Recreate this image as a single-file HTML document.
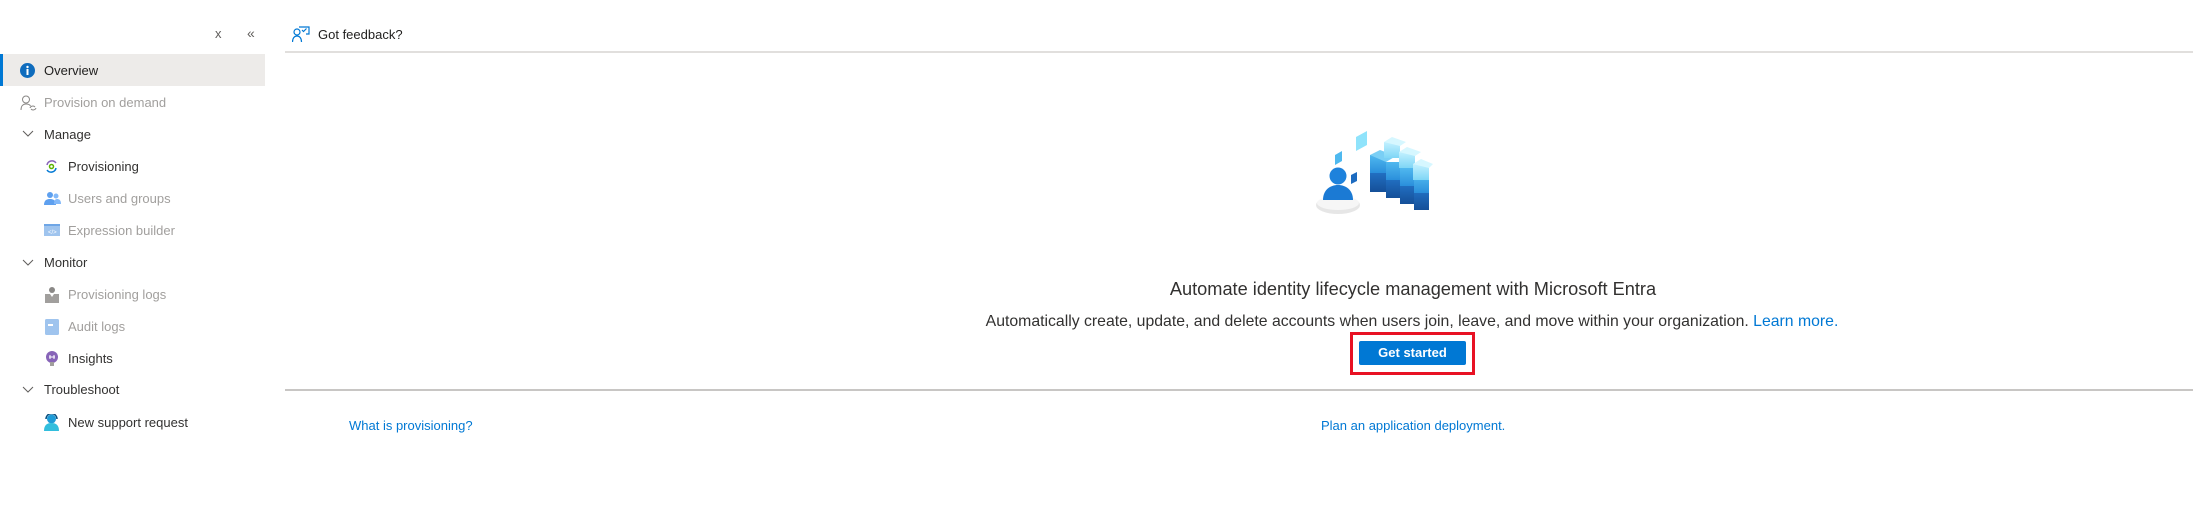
<!DOCTYPE html>
<html><head><meta charset="utf-8"><style>
*{margin:0;padding:0;box-sizing:border-box}
body{width:2193px;height:509px;background:#fff;font-family:"Liberation Sans",sans-serif;color:#323130;position:relative;overflow:hidden}
.a{position:absolute;white-space:nowrap}
.t{font-size:13px;line-height:16px}
.dis{color:#a19f9d}
.lnk{color:#0078d4}
</style></head><body>
<!-- sidebar -->
<div class="a" style="left:215px;top:26px;font-size:13px;color:#605e5c">x</div>
<div class="a" style="left:247px;top:25px;font-size:14px;color:#605e5c">«</div>
<div class="a" style="left:0;top:54px;width:265px;height:32px;background:#edebe9"></div>
<div class="a" style="left:0;top:54px;width:3px;height:32px;background:#0078d4"></div>
<svg class="a" style="left:20px;top:63px" width="15" height="15"><circle cx="7.5" cy="7.5" r="7.5" fill="#0f6cbd"/><rect x="6.5" y="6" width="2" height="6" fill="#fff"/><circle cx="7.5" cy="4" r="1.2" fill="#fff"/></svg>
<div class="a t" style="left:44px;top:63px;color:#201f1e">Overview</div>
<svg class="a" style="left:20px;top:95px" width="17" height="17" fill="none" stroke="#8a8886" stroke-width="1"><circle cx="6" cy="4.5" r="3.5"/><path d="M1 15c0-4 2-6 5-6s4 1 4.5 2"/><path d="M10 13a3 3 0 0 1 5-1M16 13a3 3 0 0 1-5 1"/></svg>
<div class="a t dis" style="left:44px;top:95px">Provision on demand</div>
<svg class="a" style="left:22px;top:130px" width="12" height="8"><path d="M1 1l5 5 5-5" fill="none" stroke="#605e5c" stroke-width="1"/></svg>
<div class="a t" style="left:44px;top:127px">Manage</div>
<svg class="a" style="left:44px;top:159px" width="15" height="15" fill="none" stroke-width="1.5"><path d="M3 6a5 5 0 0 1 9-2" stroke="#8764b8"/><path d="M12 9a5 5 0 0 1-9 2" stroke="#0078d4"/><circle cx="7.5" cy="7.5" r="2" stroke="#5db300"/></svg>
<div class="a t" style="left:68px;top:159px">Provisioning</div>
<svg class="a" style="left:44px;top:191px" width="17" height="15"><circle cx="6" cy="4" r="3" fill="#5ea0ef"/><circle cx="12" cy="5" r="2.5" fill="#83b9f9"/><path d="M0 14c0-5 3-6 6-6s6 1 6 6z" fill="#5ea0ef"/><path d="M10 13c0-3 1-5 3-5s4 1 4 5z" fill="#83b9f9"/></svg>
<div class="a t dis" style="left:68px;top:191px">Users and groups</div>
<svg class="a" style="left:44px;top:224px" width="16" height="12"><rect width="16" height="12" fill="#9fc4ee"/><rect width="16" height="2" fill="#6fa6e6"/><text x="4" y="10" font-size="6" fill="#fff">&lt;/&gt;</text></svg>
<div class="a t dis" style="left:68px;top:223px">Expression builder</div>
<svg class="a" style="left:22px;top:259px" width="12" height="8"><path d="M1 1l5 5 5-5" fill="none" stroke="#605e5c" stroke-width="1"/></svg>
<div class="a t" style="left:44px;top:255px">Monitor</div>
<svg class="a" style="left:45px;top:287px" width="14" height="16"><circle cx="7" cy="3" r="3" fill="#8a8886"/><path d="M0 7h5l2 3 2-3h5v9H0z" fill="#a19f9d"/></svg>
<div class="a t dis" style="left:68px;top:287px">Provisioning logs</div>
<svg class="a" style="left:45px;top:319px" width="14" height="16"><rect width="14" height="16" rx="1.5" fill="#9fc4ee"/><rect x="3" y="5" width="5" height="2" fill="#fff"/></svg>
<div class="a t dis" style="left:68px;top:319px">Audit logs</div>
<svg class="a" style="left:46px;top:351px" width="12" height="16"><circle cx="6" cy="6" r="6" fill="#8764b8"/><rect x="4" y="11" width="4" height="4" fill="#a19f9d"/><path d="M4 4v4M8 4v4M3 6h6" stroke="#fff" stroke-width="1"/></svg>
<div class="a t" style="left:68px;top:351px">Insights</div>
<svg class="a" style="left:22px;top:386px" width="12" height="8"><path d="M1 1l5 5 5-5" fill="none" stroke="#605e5c" stroke-width="1"/></svg>
<div class="a t" style="left:44px;top:382px">Troubleshoot</div>
<svg class="a" style="left:44px;top:414px" width="15" height="17"><circle cx="7.5" cy="5" r="4.5" fill="#1e9bd7"/><path d="M0 17c0-6 3-8 7.5-8s7.5 2 7.5 8z" fill="#32bedd"/><path d="M2 5a5.5 5.5 0 0 1 11 0" fill="none" stroke="#0a5080" stroke-width="1.5"/></svg>
<div class="a t" style="left:68px;top:415px">New support request</div>
<!-- header -->
<svg class="a" style="left:292px;top:26px" width="18" height="17" fill="none" stroke="#0078d4" stroke-width="1.2"><path d="M7 1h10v7h-3"/><circle cx="5" cy="6" r="3"/><path d="M0.5 16c0-4 2-6 4.5-6s4.5 2 4.5 6"/><path d="M10 4l1.5 1.5 3-3"/></svg>
<div class="a t" style="left:318px;top:27px;color:#201f1e">Got feedback?</div>
<div class="a" style="left:285px;top:51px;width:1908px;height:2px;background:#e1dfdd"></div>
<!-- illustration -->
<svg class="a" style="left:1300px;top:120px" width="150" height="105">
<defs><linearGradient id="tl" x1="0" y1="0" x2="0" y2="1"><stop offset="0" stop-color="#c3f1ff"/><stop offset="1" stop-color="#7fd6f6"/></linearGradient><linearGradient id="md" x1="0" y1="0" x2="0" y2="1"><stop offset="0" stop-color="#50b8ef"/><stop offset="1" stop-color="#2a8fdb"/></linearGradient><linearGradient id="dk" x1="0" y1="0" x2="0" y2="1"><stop offset="0" stop-color="#2271c4"/><stop offset="1" stop-color="#154f98"/></linearGradient></defs>
<ellipse cx="38" cy="85" rx="22" ry="9" fill="#e6e6e6"/><ellipse cx="38" cy="83" rx="21" ry="7" fill="#f6f6f6"/>
<path d="M23 80c0-10 7-15 15-15s15 5 15 15z" fill="#1b7ad4"/>
<circle cx="38" cy="56" r="8.5" fill="#1e82dc"/>
<path d="M56 17l11-6v14l-11 6z" fill="#8fe3fb"/>
<path d="M35 35l7-4v10l-7 4z" fill="#4fb9ef"/>
<path d="M51 55l6-3v9l-6 3z" fill="#1d6bc0"/>
<g>
<rect x="70" y="52" width="16" height="20" fill="url(#dk)"/><rect x="86" y="58" width="14" height="20" fill="url(#dk)"/><rect x="100" y="64" width="14" height="20" fill="url(#dk)"/><rect x="114" y="70" width="15" height="20" fill="url(#dk)"/>
<rect x="70" y="35" width="16" height="18" fill="url(#md)"/><rect x="86" y="42" width="14" height="18" fill="url(#md)"/><rect x="100" y="48" width="14" height="18" fill="url(#md)"/><rect x="114" y="55" width="15" height="18" fill="url(#md)"/>
<path d="M70 35l10-5 16 6-10 6z" fill="#7acff5"/>
<rect x="84" y="22" width="16" height="16" fill="url(#tl)"/><path d="M84 22l8-5 14 5-6 4z" fill="#d6f7ff"/>
<rect x="99" y="32" width="16" height="16" fill="url(#tl)"/><path d="M99 32l8-5 14 5-6 4z" fill="#d6f7ff"/>
<rect x="113" y="44" width="16" height="16" fill="url(#tl)"/><path d="M113 44l8-5 12 5-4 4z" fill="#d6f7ff"/>
</g>
</svg>
<!-- text -->
<div class="a" style="left:1113px;top:279px;width:600px;text-align:center;font-size:18.2px;line-height:20px;color:#323130">Automate identity lifecycle management with Microsoft Entra</div>
<div class="a" style="left:912px;top:313px;width:1000px;text-align:center;font-size:15.8px;line-height:18px;color:#323130">Automatically create, update, and delete accounts when users join, leave, and move within your organization. <span class="lnk">Learn more.</span></div>
<div class="a" style="left:1350px;top:332px;width:125px;height:43px;border:3px solid #e81123"></div>
<div class="a" style="left:1359px;top:341px;width:107px;height:24px;background:#0078d4;border-radius:2px;color:#fff;font-size:13px;font-weight:bold;line-height:24px;text-align:center">Get started</div>
<div class="a" style="left:285px;top:389px;width:1908px;height:2px;background:#c8c6c4"></div>
<div class="a t lnk" style="left:349px;top:418px">What is provisioning?</div>
<div class="a t lnk" style="left:1321px;top:418px">Plan an application deployment.</div>
</body></html>
